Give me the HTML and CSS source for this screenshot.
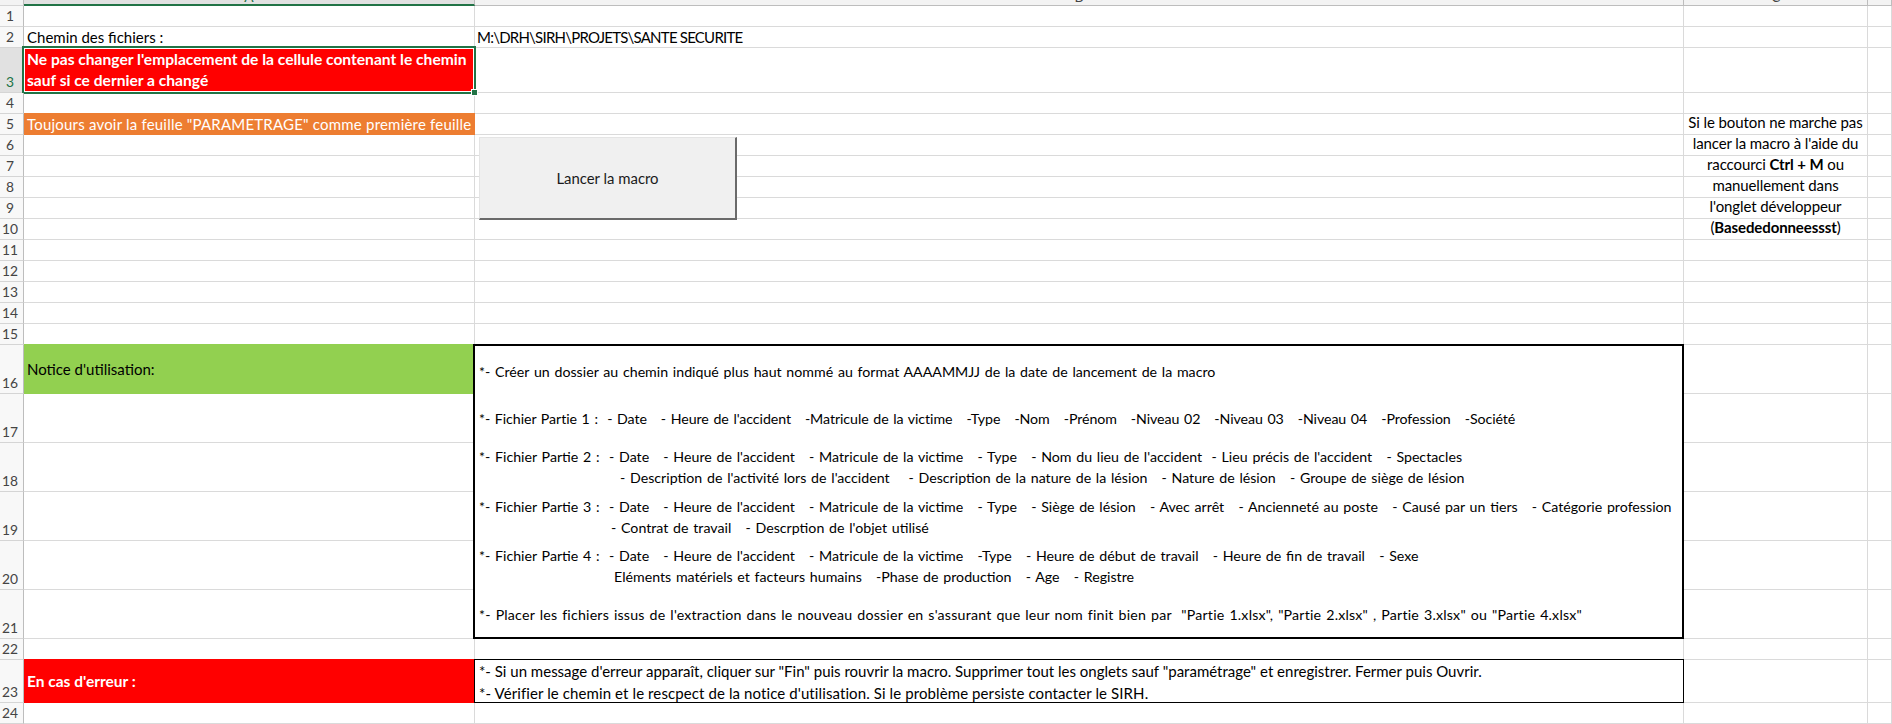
FILE: index.html
```html
<!DOCTYPE html>
<html lang="fr">
<head>
<meta charset="utf-8">
<title>PARAMETRAGE</title>
<link rel="stylesheet" href="styles.css">
</head>
<body>
<div class="sheet">
  <div class="row hdr">
    <div class="rh corner"></div>
    <div class="ch sel"><span>A</span></div>
    <div class="ch"><span>B</span></div>
    <div class="ch"><span>C</span></div>
    <div class="ch"></div>
  </div>
  <div class="row"><div class="rh">1</div><div></div><div></div><div></div><div></div></div>
  <div class="row"><div class="rh">2</div><div class="txt">Chemin des fichiers :</div><div class="txt path">M:\DRH\SIRH\PROJETS\SANTE SECURITE</div><div></div><div></div></div>
  <div class="row h45"><div class="rh selrow">3</div><div class="txt red bold wrap selected">Ne pas changer l'emplacement de la cellule contenant le chemin<br>sauf si ce dernier a changé<span class="handle"></span></div><div></div><div></div><div></div></div>
  <div class="row"><div class="rh">4</div><div></div><div></div><div></div><div></div></div>
  <div class="row"><div class="rh">5</div><div class="txt orange">Toujours avoir la feuille "PARAMETRAGE" comme première feuille</div><div></div><div></div><div></div></div>
  <div class="row"><div class="rh">6</div><div></div><div></div><div></div><div></div></div>
  <div class="row"><div class="rh">7</div><div></div><div></div><div></div><div></div></div>
  <div class="row"><div class="rh">8</div><div></div><div></div><div></div><div></div></div>
  <div class="row"><div class="rh">9</div><div></div><div></div><div></div><div></div></div>
  <div class="row"><div class="rh">10</div><div></div><div></div><div></div><div></div></div>
  <div class="row"><div class="rh">11</div><div></div><div></div><div></div><div></div></div>
  <div class="row"><div class="rh">12</div><div></div><div></div><div></div><div></div></div>
  <div class="row"><div class="rh">13</div><div></div><div></div><div></div><div></div></div>
  <div class="row"><div class="rh">14</div><div></div><div></div><div></div><div></div></div>
  <div class="row"><div class="rh">15</div><div></div><div></div><div></div><div></div></div>
  <div class="row h49"><div class="rh">16</div><div class="txt green mid">Notice d'utilisation:</div><div></div><div></div><div></div></div>
  <div class="row h49"><div class="rh">17</div><div></div><div></div><div></div><div></div></div>
  <div class="row h49"><div class="rh">18</div><div></div><div></div><div></div><div></div></div>
  <div class="row h49"><div class="rh">19</div><div></div><div></div><div></div><div></div></div>
  <div class="row h49"><div class="rh">20</div><div></div><div></div><div></div><div></div></div>
  <div class="row h49"><div class="rh">21</div><div></div><div></div><div></div><div></div></div>
  <div class="row"><div class="rh">22</div><div></div><div></div><div></div><div></div></div>
  <div class="row h43"><div class="rh">23</div><div class="txt red bold mid err-label">En cas d'erreur :</div><div></div><div></div><div></div></div>
  <div class="row"><div class="rh">24</div><div></div><div></div><div></div><div></div></div>

  <button class="macro-btn" type="button">Lancer la macro</button>

  <div class="side-note">Si le bouton ne marche pas<br>lancer la macro à l'aide du<br>raccourci <b>Ctrl + M</b> ou<br>manuellement dans<br>l'onglet développeur<br>(<b>Basededonneessst</b>)</div>

  <div class="notice">
    <p class="p1">*- Créer un dossier au chemin indiqué plus haut nommé au format AAAAMMJJ de la date de lancement de la macro</p>
    <p class="p2">*- Fichier Partie 1 :  - Date   - Heure de l'accident   -Matricule de la victime   -Type   -Nom   -Prénom   -Niveau 02   -Niveau 03   -Niveau 04   -Profession   -Société</p>
    <p class="p3">*- Fichier Partie 2 :  - Date   - Heure de l'accident   - Matricule de la victime   - Type   - Nom du lieu de l'accident  - Lieu précis de l'accident   - Spectacles<span class="cont c2">- Description de l'activité lors de l'accident    - Description de la nature de la lésion   - Nature de lésion   - Groupe de siège de lésion</span></p>
    <p class="p4">*- Fichier Partie 3 :  - Date   - Heure de l'accident   - Matricule de la victime   - Type   - Siège de lésion   - Avec arrêt   - Ancienneté au poste   - Causé par un tiers   - Catégorie profession<span class="cont c3">- Contrat de travail   - Descrption de l'objet utilisé</span></p>
    <p class="p5">*- Fichier Partie 4 :  - Date   - Heure de l'accident   - Matricule de la victime   -Type   - Heure de début de travail   - Heure de fin de travail   - Sexe<span class="cont c4">Eléments matériels et facteurs humains   -Phase de production   - Age   - Registre</span></p>
    <p class="p6">*- Placer les fichiers issus de l'extraction dans le nouveau dossier en s'assurant que leur nom finit bien par  "Partie 1.xlsx", "Partie 2.xlsx" , Partie 3.xlsx" ou "Partie 4.xlsx"</p>
  </div>

  <div class="errbox">
    <p>*- Si un message d'erreur apparaît, cliquer sur "Fin" puis rouvrir la macro. Supprimer tout les onglets sauf "paramétrage" et enregistrer. Fermer puis Ouvrir.</p>
    <p class="e2">*- Vérifier le chemin et le rescpect de la notice d'utilisation. Si le problème persiste contacter le SIRH.</p>
  </div>
</div>
</body>
</html>
```
FILE: styles.css
```css
html, body {
  margin: 0;
  padding: 0;
  background: #fff;
}
body {
  width: 1892px;
  height: 724px;
  overflow: hidden;
  font-family: Lato, "Liberation Sans", sans-serif;
  font-size: 15px;
  color: #000;
}
.sheet {
  position: relative;
  width: 1892px;
  height: 724px;
}
.row {
  display: grid;
  grid-template-columns: 24px 451px 1209px 184px 24px;
  height: 21px;
}
.row.h45 { height: 45px; }
.row.h49 { height: 49px; }
.row.h43 { height: 43px; }
.row > div {
  box-sizing: border-box;
  border-right: 1px solid #dadada;
  border-bottom: 1px solid #dadada;
  white-space: nowrap;
  position: relative;
}
.row > .rh {
  background: #f8f8f8;
  border-right: 1px solid #bdbdbd;
  border-bottom: 1px solid #d5d5d5;
  color: #444;
  font-size: 13.8px;
  line-height: 16px;
  display: flex;
  align-items: flex-end;
  justify-content: center;
  padding: 0 3px 2px 0;
}
.row > .rh.selrow {
  background: #e1e1e1;
  color: #217346;
}
.hdr { height: 6px; }
.hdr > div {
  background: #f3f3f3;
  border-bottom: 1px solid #bdbdbd;
  border-right: 1px solid #bdbdbd;
  overflow: hidden;
  text-align: center;
  color: #444;
}
.hdr > .ch span {
  display: block;
  font-size: 13.8px;
  line-height: 14px;
  margin-top: -10px;
}
.hdr > .ch.sel {
  background: #e1e1e1;
  border-bottom: 2px solid #217346;
  color: #217346;
}
.hdr > .corner {
  background: #f3f3f3;
  padding: 0;
}

.txt {
  line-height: 20px;
  padding-left: 3px;
  display: flex;
  align-items: flex-end;
}
.txt.path {
  letter-spacing: -0.77px;
  padding-left: 2px;
}
.txt.wrap {
  display: block;
  padding-top: 1px;
  line-height: 21px;
}
.txt.mid {
  align-items: center;
}
.bold {
  font-weight: 700;
}
.wrap.bold {
  font-size: 15.6px;
}
.err-label {
  font-size: 15.5px;
}

.row > .red {
  background: #ff0000;
  border-color: #ff0000;
  box-shadow: 0 -1px 0 #ff0000;
  color: #fff;
}
.row > .orange {
  background: #ed7d31;
  border-color: #ed7d31;
  box-shadow: 0 -1px 0 #ed7d31;
  color: #fff;
  letter-spacing: 0.2px;
}
.row > .green {
  background: #92d050;
  border-color: #92d050;
  box-shadow: 0 -1px 0 #92d050;
  color: #000;
}
.selected::after {
  content: "";
  position: absolute;
  left: -2px;
  top: -2px;
  right: -2px;
  bottom: -2px;
  border: 2px solid #217346;
  box-shadow: inset 0 0 0 1px #fff;
  pointer-events: none;
}
.handle {
  position: absolute;
  right: -3px;
  bottom: -3px;
  width: 5px;
  height: 5px;
  background: #217346;
  box-shadow: 0 0 0 1px #fff;
  z-index: 2;
}

.macro-btn {
  position: absolute;
  left: 479px;
  top: 137px;
  width: 258px;
  height: 83px;
  box-sizing: border-box;
  margin: 0;
  padding: 0;
  background: #f0f0f0;
  border: none;
  border-top: 1px solid #e4e4e4;
  border-left: 1px solid #e4e4e4;
  border-right: 2px solid #6a6a6a;
  border-bottom: 2px solid #6a6a6a;
  font-family: Lato, "Liberation Sans", sans-serif;
  font-size: 14.9px;
  color: #1a1a1a;
}

.side-note {
  position: absolute;
  left: 1684px;
  top: 112px;
  width: 183px;
  text-align: center;
  line-height: 21px;
  white-space: nowrap;
  letter-spacing: -0.1px;
}

.notice {
  position: absolute;
  left: 473px;
  top: 344px;
  width: 1211px;
  height: 295px;
  box-sizing: border-box;
  border: 2px solid #000;
  background: #fff;
  padding: 16px 0 0 4px;
  font-size: 14.2px;
  word-spacing: 1.1px;
  line-height: 20.5px;
}
.notice p {
  margin: 0;
  white-space: pre;
}
.notice .p2 { margin-top: 26px; letter-spacing: -0.07px; }
.notice .p3 { margin-top: 18px; }
.notice .p4 { margin-top: 9px; }
.notice .p5 { margin-top: 8px; }
.notice .p6 { margin-top: 18px; letter-spacing: 0.2px; }
.cont { display: block; }
.c2 { padding-left: 141px; }
.c3 { padding-left: 132px; }
.c4 { padding-left: 135px; }

.errbox {
  position: absolute;
  left: 474px;
  top: 659px;
  width: 1210px;
  height: 44px;
  box-sizing: border-box;
  border: 1px solid #000;
  background: #fff;
  padding: 0 0 0 4px;
  line-height: 22px;
}
.errbox p {
  margin: 0;
  white-space: pre;
}
.errbox .e2 {
  letter-spacing: 0.1px;
}
```
